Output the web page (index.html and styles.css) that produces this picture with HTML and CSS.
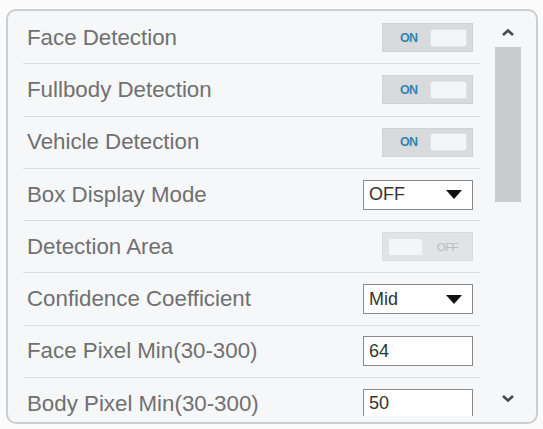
FILE: index.html
```html
<!DOCTYPE html>
<html>
<head>
<meta charset="utf-8">
<link rel="stylesheet" href="styles.css">
</head>
<body>
<div class="panel">
  <div class="list">
    <div class="row">
      <span class="label">Face Detection</span>
      <div class="toggle on"><span class="tlabel">ON</span><span class="knob"></span></div>
    </div>
    <div class="row">
      <span class="label">Fullbody Detection</span>
      <div class="toggle on"><span class="tlabel">ON</span><span class="knob"></span></div>
    </div>
    <div class="row">
      <span class="label">Vehicle Detection</span>
      <div class="toggle on"><span class="tlabel">ON</span><span class="knob"></span></div>
    </div>
    <div class="row">
      <span class="label">Box Display Mode</span>
      <div class="select"><span>OFF</span><span class="caret"></span></div>
    </div>
    <div class="row">
      <span class="label">Detection Area</span>
      <div class="toggle off"><span class="knob"></span><span class="tlabel">OFF</span></div>
    </div>
    <div class="row">
      <span class="label">Confidence Coefficient</span>
      <div class="select"><span>Mid</span><span class="caret"></span></div>
    </div>
    <div class="row">
      <span class="label">Face Pixel Min(30-300)</span>
      <div class="input">64</div>
    </div>
    <div class="row">
      <span class="label">Body Pixel Min(30-300)</span>
      <div class="input">50</div>
    </div>
  </div>
  <div class="scroll">
    <div class="arrow">
      <svg width="14" height="9" viewBox="0 0 14 9"><path d="M2 7 L7 2.5 L12 7" fill="none" stroke="#4a4a4a" stroke-width="2.6"/></svg>
    </div>
    <div class="thumb"></div>
    <div class="spacer"></div>
    <div class="arrow">
      <svg width="14" height="9" viewBox="0 0 14 9"><path d="M2 2 L7 6.5 L12 2" fill="none" stroke="#4a4a4a" stroke-width="2.6"/></svg>
    </div>
  </div>
</div>
</body>
</html>
```
FILE: styles.css
```css
* { box-sizing: border-box; }
html, body { margin: 0; padding: 0; }
body {
  width: 543px;
  height: 429px;
  background: #fbfbfc;
  font-family: "Liberation Sans", Arial, sans-serif;
  padding: 9px 5px 5px 6px;
}
.panel {
  height: 415px;
  border: 2px solid #cbced1;
  border-radius: 10px;
  background: #f6f7f9;
  display: flex;
  overflow: hidden;
}
.list {
  width: 457px;
  margin-left: 15px;
  padding-top: 1px;
  height: 405px;
  overflow: hidden;
}
.row {
  height: 52.3px;
  border-bottom: 1px solid #dcdee1;
  display: flex;
  align-items: center;
  justify-content: space-between;
  padding: 0 7px 0 4px;
}
.label {
  font-size: 22.3px;
  color: #707070;
}
.toggle {
  width: 91px;
  height: 29px;
  border: 1px solid #cfd1d3;
  background: #d8dadc;
  display: flex;
  align-items: center;
  padding: 0 5px;
}
.toggle.on { justify-content: space-between; padding-left: 17px; }
.toggle.off { background: #e1e3e5; border-color: #d9dbdd; justify-content: space-between; padding-right: 14px; }
.tlabel {
  font-size: 12.5px;
  font-weight: bold;
  color: #2f86b4;
  letter-spacing: -0.6px;
}
.toggle.off .tlabel { color: #b9bbbd; font-weight: normal; font-size: 11.5px; }
.knob {
  width: 37px;
  height: 18px;
  background: #f4f5f6;
  border: 1px solid #e3e4e6;
  border-radius: 3px;
}
.toggle.off .knob { width: 35px; }
.select, .input {
  width: 110px;
  height: 30px;
  border: 1px solid #8a8a8a;
  background: #ffffff;
  font-size: 18px;
  color: #333;
  display: flex;
  align-items: center;
  padding-left: 5px;
}
.select { justify-content: space-between; padding-right: 10px; }
.caret {
  width: 0;
  height: 0;
  border-left: 8px solid transparent;
  border-right: 8px solid transparent;
  border-top: 9px solid #111;
}
.scroll {
  flex: 1;
  display: flex;
  flex-direction: column;
  align-items: center;
  padding: 11px 0 14px 0;
}
.arrow {
  height: 20px;
  width: 26px;
  display: flex;
  align-items: center;
  justify-content: center;
}
.thumb {
  width: 26px;
  height: 155px;
  margin-top: 5px;
  background: #cacbcd;
}
.spacer { flex: 1; }
```
